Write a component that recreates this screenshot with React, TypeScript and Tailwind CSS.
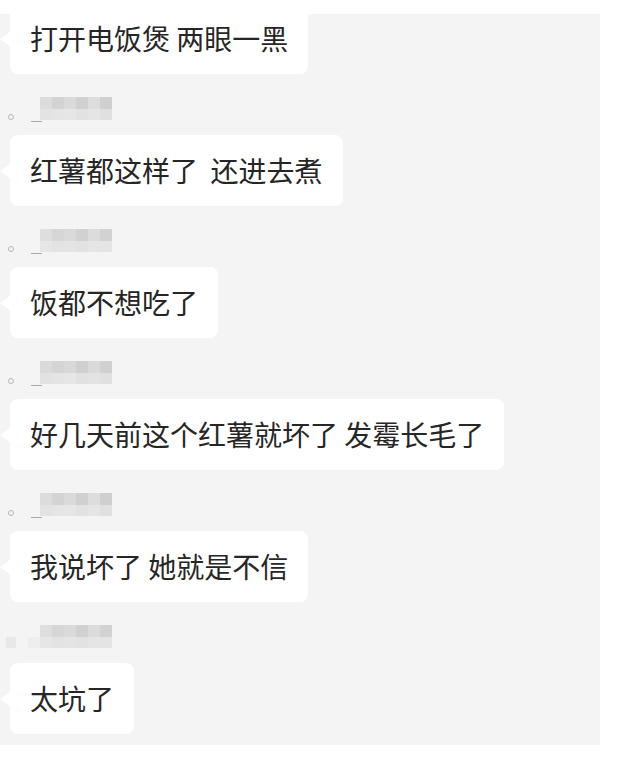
import React from "react";

interface Message {
  text: string;
  name?: string[][];
  mark?: "dot" | "square";
}

// blurred nickname mosaics (two rows of 12px blocks)
const mosaicA = [
  ["#dcdcdc", "#d3d3d3", "#dadada", "#d0d0d0", "#dddddd", "#cfcfcf"],
  ["#e3e3e3", "#e5e5e5", "#e6e6e6", "#e2e2e2", "#e5e5e5", "#e0e0e0"],
];
const mosaicB = [
  ["#dedede", "#d6d6d6", "#dadada", "#d1d1d1", "#dcdcdc", "#d2d2d2"],
  ["#e6e6e6", "#e3e3e3", "#e4e4e4", "#e2e2e2", "#e5e5e5", "#e4e4e4"],
];
const mosaicC = [
  ["#dadada", "#d4d4d4", "#d8d8d8", "#cfcfcf", "#dadada", "#d0d0d0"],
  ["#e2e2e2", "#e4e4e4", "#e6e6e6", "#e1e1e1", "#e3e3e3", "#e0e0e0"],
];

const messages: Message[] = [
  { text: "打开电饭煲 两眼一黑" },
  { text: "红薯都这样了  还进去煮", name: mosaicA, mark: "dot" },
  { text: "饭都不想吃了", name: mosaicB, mark: "dot" },
  { text: "好几天前这个红薯就坏了 发霉长毛了", name: mosaicC, mark: "dot" },
  { text: "我说坏了 她就是不信", name: mosaicA, mark: "dot" },
  { text: "太坑了", name: mosaicB, mark: "square" },
];

function NameRow({ blocks, mark }: { blocks: string[][]; mark: "dot" | "square" }) {
  return (
    <div className="h-[61px] pt-[23px] flex items-start">
      <div className="w-[40px] h-[23px] relative">
        {mark === "dot" ? (
          <div className="absolute left-[8px] top-[17px] w-[6px] h-[6px] rounded-full border border-[#b8b8b8]" />
        ) : (
          <>
            <div className="absolute left-[6px] top-[12px] w-[10px] h-[11px] bg-[#e8e8e8]" />
            <div className="absolute left-[28px] top-[12px] w-[12px] h-[11px] bg-[#eeeeee]" />
          </>
        )}
        {mark === "dot" && (
          <div className="absolute left-[31px] top-[24px] w-[11px] h-[1px] bg-[#a8a8a8]" />
        )}
      </div>
      <div className="flex flex-col">
        {blocks.map((row, r) => (
          <div key={r} className="flex">
            {row.map((c, i) => (
              <div
                key={i}
                className={r === 0 ? "w-[12px] h-[12px]" : "w-[12px] h-[11px]"}
                style={{ backgroundColor: c }}
              />
            ))}
          </div>
        ))}
      </div>
    </div>
  );
}

function Bubble({ text }: { text: string }) {
  return (
    <div className="relative ml-[10px] self-start">
      {/* tail */}
      <svg
        className="absolute left-[-10px] top-[26px]"
        width="11"
        height="20"
        viewBox="0 0 11 20"
      >
        <path d="M11 0 C10 5 3 7 0 10 C3 13 10 15 11 20 Z" fill="#ffffff" />
      </svg>
      <div className="bg-white rounded-lg px-[20px] py-[14px] text-[28px] leading-[43px] text-[#262626] whitespace-pre font-['Noto_Sans_CJK_SC','Microsoft_YaHei',sans-serif]">
        {text}
      </div>
    </div>
  );
}

export default function App() {
  return (
    <div className="w-[627px] h-[767px] bg-white pt-[14px]">
      <div className="w-[600px] h-[731px] bg-[#f4f4f4] overflow-hidden">
        <div className="flex flex-col mt-[-11px]">
          {messages.map((m, i) => (
            <React.Fragment key={i}>
              {m.name && m.mark && <NameRow blocks={m.name} mark={m.mark} />}
              <Bubble text={m.text} />
            </React.Fragment>
          ))}
        </div>
      </div>
    </div>
  );
}
